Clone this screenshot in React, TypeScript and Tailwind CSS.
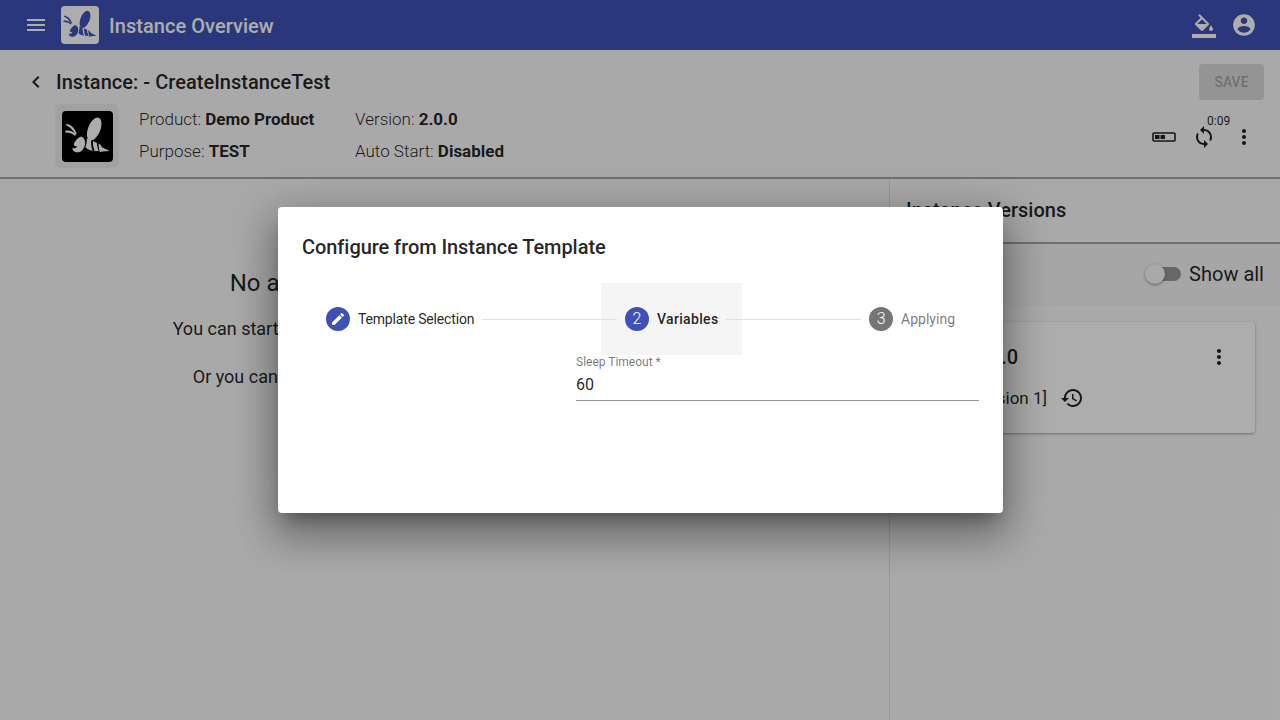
const font = { fontFamily: "Roboto, sans-serif" };

function Icon({ d, className }: { d: string; className?: string }) {
  return (
    <svg viewBox="0 0 24 24" fill="currentColor" className={className}>
      <path d={d} />
    </svg>
  );
}

const MENU = "M3 18h18v-2H3v2zm0-5h18v-2H3v2zm0-7v2h18V6H3z";
const FILL =
  "M16.56 8.94L7.62 0 6.21 1.41l2.38 2.38-5.15 5.15c-.59.59-.59 1.54 0 2.12l5.5 5.5c.29.29.68.44 1.06.44s.77-.15 1.06-.44l5.5-5.5c.59-.58.59-1.53 0-2.12zM5.21 10L10 5.21 14.79 10H5.21zM19 11.5s-2 2.17-2 3.5c0 1.1.9 2 2 2s2-.9 2-2c0-1.33-2-3.5-2-3.5zM0 20h24v4H0z";
const ACCOUNT =
  "M12 2C6.48 2 2 6.48 2 12s4.48 10 10 10 10-4.48 10-10S17.52 2 12 2zm0 3c1.66 0 3 1.34 3 3s-1.34 3-3 3-3-1.34-3-3 1.34-3 3-3zm0 14.2c-2.5 0-4.71-1.28-6-3.22.03-1.99 4-3.08 6-3.08 1.99 0 5.97 1.09 6 3.08-1.29 1.94-3.5 3.22-6 3.22z";
const BACK = "M15.41 7.41L14 6l-6 6 6 6 1.41-1.41L10.83 12z";
const SYNC =
  "M12 4V1L8 5l4 4V6c3.31 0 6 2.69 6 6 0 1.01-.25 1.97-.7 2.8l1.46 1.46C19.54 15.03 20 13.57 20 12c0-4.42-3.58-8-8-8zm0 14c-3.31 0-6-2.69-6-6 0-1.01.25-1.97.7-2.8L5.24 7.74C4.46 8.97 4 10.43 4 12c0 4.42 3.58 8 8 8v3l4-4-4-4v3z";
const MORE =
  "M12 8c1.1 0 2-.9 2-2s-.9-2-2-2-2 .9-2 2 .9 2 2 2zm0 2c-1.1 0-2 .9-2 2s.9 2 2 2 2-.9 2-2-.9-2-2-2zm0 6c-1.1 0-2 .9-2 2s.9 2 2 2 2-.9 2-2-.9-2-2-2z";
const HISTORY =
  "M13 3c-4.97 0-9 4.03-9 9H1l3.89 3.89.07.14L9 12H6c0-3.87 3.13-7 7-7s7 3.13 7 7-3.13 7-7 7c-1.93 0-3.68-.79-4.94-2.06l-1.42 1.42C8.27 19.99 10.51 21 13 21c4.97 0 9-4.03 9-9s-4.03-9-9-9zm-1 5v5l4.28 2.54.72-1.21-3.5-2.08V8H12z";
const EDIT =
  "M3 17.25V21h3.75L17.81 9.94l-3.75-3.75L3 17.25zM20.71 7.04c.39-.39.39-1.02 0-1.41l-2.34-2.34c-.39-.39-1.02-.39-1.41 0l-1.83 1.83 3.75 3.75 1.83-1.83z";

function Bee({ className }: { className?: string }) {
  return (
    <svg viewBox="0 0 38 38" fill="currentColor" className={className}>
      <ellipse cx="24" cy="13.4" rx="4.6" ry="9" transform="rotate(22 24 13.4)" />
      <path d="M3.500 9.500c3.500.8 5.800 3 7.500 7.500l-1 .5c-2-3.500-4-5.500-7-6.800z" />
      <path d="M2.500 14.800c3-.6 5.500.2 8 2.800l-.7.8c-2.500-1.800-4.800-2.500-7.500-2.400z" />
      <path d="M14.500 19c2 1 3 3.200 2.700 5.500-.4 3.200-2.500 6.300-5.700 6.300-2.700 0-3.800-1.800-3.700-3.200 1.500.4 3 0 3.400-1.200-1-.2-2.200-.6-2.500-1.300 1-2.900 3.300-5.600 5.800-6.100z" />
      <path d="M18.500 20.300l3.200 1.500c-.2 3 .1 5 1.200 7.900-2.400-.2-4.200-1.200-5.500-2.600.8-2.100 1.200-4.500 1.100-6.800z" />
      <path d="M23 22.300l3 1.500c.1 2 .6 3.900 1.400 5.900l-3 .2c-1-2.400-1.500-5-1.400-7.600z" />
      <path d="M27.300 24.300c1.100.5 2 1.400 2.500 2.700l5.700 2.800-5.700.4c-.5.400-1 .600-1.500.600-.700-2-1-4.300-1-6.500z" />
    </svg>
  );
}

function Step({
  active,
  done,
  n,
  label,
  labelClass,
}: {
  active?: boolean;
  done?: boolean;
  n: string;
  label: string;
  labelClass?: string;
}) {
  return (
    <div className={`flex h-[72px] items-center px-6 ${active ? "bg-[#f5f5f5]" : ""}`}>
      <div
        className={`flex h-6 w-6 items-center justify-center rounded-full text-base font-light text-white ${
          active || done ? "bg-[#3f51b5]" : "bg-[#757575]"
        }`}
      >
        {done ? <Icon d={EDIT} className="h-4 w-4" /> : n}
      </div>
      <span
        className={`ml-2 text-sm leading-5 ${labelClass ?? ""} ${
          active
            ? "font-medium text-black/87"
            : done
              ? "text-black/87"
              : "text-black/54"
        }`}
      >
        {label}
      </span>
    </div>
  );
}

function StepLine() {
  return <div className="z-10 mx-[-16px] h-px flex-1 bg-[#e0e0e0]" />;
}

export default function App() {
  return (
    <div
      className="relative flex h-[720px] w-[1280px] flex-col overflow-hidden bg-[#fafafa] text-black/87"
      style={font}
    >
      <header className="flex h-[50px] shrink-0 items-center bg-[#3f51b5] text-white">
        <Icon d={MENU} className="ml-6 h-6 w-6" />
        <div className="ml-[13px] flex h-[38px] w-[38px] items-center justify-center rounded-sm bg-white text-[#3f51b5]">
          <Bee className="h-[38px] w-[38px]" />
        </div>
        <span className="mt-px ml-2.5 text-xl font-medium tracking-[0.05px]">Instance Overview</span>
        <Icon d={FILL} className="mt-[2px] ml-auto h-6 w-6" />
        <Icon d={ACCOUNT} className="mr-[23px] ml-[15px] h-[26px] w-[26px]" />
      </header>

      <section className="h-[129px] shrink-0 border-b-2 border-[#a6a6a6]">
        <div className="flex items-start pt-3.5 pr-4">
          <Icon d={BACK} className="mt-[6px] ml-6 h-6 w-6" />
          <h1 className="mt-1 ml-2 text-xl leading-[28px] font-medium tracking-[0.03px]">
            Instance: - CreateInstanceTest
          </h1>
          <button className="ml-auto h-9 w-[65px] rounded bg-black/12 text-sm font-medium text-black/26">
            SAVE
          </button>
        </div>
        <div className="flex items-start pl-[55px]">
          <div className="mt-[4px] flex h-16 w-16 items-center justify-center rounded-md bg-black/5">
            <div className="flex h-[51px] w-[51px] items-center justify-center rounded-sm bg-black text-white">
              <Bee className="h-[51px] w-[51px]" />
            </div>
          </div>
          <div className="mt-[7px] ml-5 grid grid-cols-[216px_auto] gap-y-2 text-[17px] leading-6 font-light">
            <div>
              Product: <b className="font-bold">Demo Product</b>
            </div>
            <div>
              Version: <b className="font-bold">2.0.0</b>
            </div>
            <div>
              Purpose: <b className="font-bold">TEST</b>
            </div>
            <div>
              Auto Start: <b className="font-bold">Disabled</b>
            </div>
          </div>
          <div className="mt-[12px] mr-6 ml-auto flex items-center gap-4 pt-[13px]">
            <svg viewBox="0 0 24 12" className="h-3 w-6" fill="none">
              <rect x="1" y="2" width="22" height="8" rx="1" stroke="currentColor" strokeWidth="1.6" />
              <rect x="3" y="4" width="4.500" height="4" fill="currentColor" />
              <rect x="8.500" y="4" width="4.500" height="4" fill="currentColor" />
            </svg>
            <div className="relative h-6 w-6">
              <Icon d={SYNC} className="h-6 w-6" />
              <span className="absolute -top-[12px] left-[15px] text-xs leading-4">0:09</span>
            </div>
            <Icon d={MORE} className="h-6 w-6" />
          </div>
        </div>
      </section>

      <main className="flex min-h-0 flex-1">
        <div className="flex w-[889px] shrink-0 flex-col items-center pt-[88px]">
          <div className="text-2xl leading-8">No application has been configured here</div>
          <p className="mt-[16px] text-lg leading-7">
            You can start by dragging applications from the list to any node here
          </p>
          <p className="mt-[20px] text-lg leading-7">
            Or you can apply an existing instance template to this instance.
          </p>
        </div>
        <aside className="flex-1 border-l border-[#e0e0e0]">
          <div className="flex h-[65px] items-center border-b-2 border-[#a6a6a6] pb-[1px] pl-4 text-xl font-medium">
            Instance Versions
          </div>
          <div className="flex h-[62px] items-center justify-end bg-[#f5f5f5] pr-4 pb-[2px]">
            <div className="relative h-3.5 w-[34px] rounded-full bg-black/38">
              <div className="absolute -top-[3px] -left-[2px] h-5 w-5 rounded-full bg-[#fafafa] shadow-[0_1px_3px_rgba(0,0,0,0.4)]" />
            </div>
            <span className="ml-2 text-xl">Show all</span>
          </div>
          <div className="mt-4 mr-[25px] ml-4 flex h-[111px] flex-col rounded bg-white px-4 pt-[21px] shadow-[0_1px_3px_rgba(0,0,0,0.35)]">
            <div className="flex items-center justify-between">
              <span className="pl-[51px] text-xl leading-7 font-medium">2.0.0</span>
              <Icon d={MORE} className="mr-[8px] h-6 w-6" />
            </div>
            <div className="mt-[15px] flex items-center pl-[45px]">
              <span className="text-[17px] leading-6">[Version 1]</span>
              <Icon d={HISTORY} className="ml-[13px] h-6 w-6" />
            </div>
          </div>
        </aside>
      </main>

      <div className="absolute inset-0 flex items-center justify-center bg-black/32">
        <div className="ml-px flex h-[306px] w-[725px] flex-col rounded bg-white px-6 pt-6 shadow-[0_11px_15px_-7px_rgba(0,0,0,0.3),0_24px_38px_3px_rgba(0,0,0,0.22),0_9px_46px_8px_rgba(0,0,0,0.2)]">
          <h2 className="text-xl leading-8 font-medium tracking-[-0.06px]">
            Configure from Instance Template
          </h2>
          <div className="mt-5 flex items-center">
            <Step done n="1" label="Template Selection" labelClass="tracking-[-0.17px]" />
            <StepLine />
            <Step active n="2" label="Variables" labelClass="tracking-[0.33px]" />
            <StepLine />
            <Step n="3" label="Applying" />
          </div>
          <div className="ml-[274px] flex flex-col border-b border-[#949494] pb-[5px]">
            <label className="text-xs leading-[14px] text-black/54">Sleep Timeout *</label>
            <span className="mt-1.5 text-base leading-5">60</span>
          </div>
        </div>
      </div>
    </div>
  );
}
